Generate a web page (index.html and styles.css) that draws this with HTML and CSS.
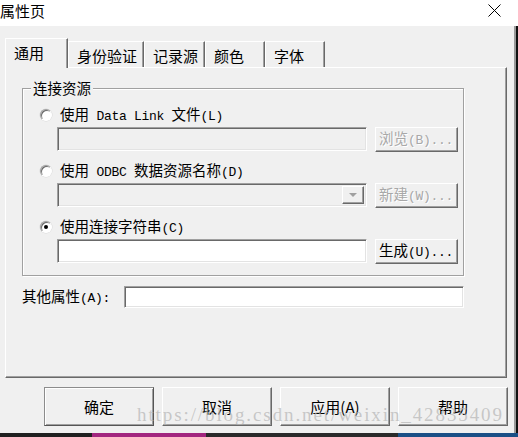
FILE: index.html
```html
<!DOCTYPE html>
<html lang="zh-CN">
<head>
    <meta charset="UTF-8">
    <meta name="viewport" content="width=device-width, initial-scale=1.0">
    <title>属性页</title>
    <link rel="stylesheet" href="styles.css">
</head>
<body>
    <div class="window">
        <div class="titlebar">
            <span class="title">属性页</span>
            <svg class="close" width="13" height="13" viewBox="0 0 13 13">
                <path d="M0.5 0.5L12.5 12.5M12.5 0.5L0.5 12.5" stroke="#000" stroke-width="1" fill="none"/>
            </svg>
        </div>
        <div class="frame">
            <div class="client">
                <div class="tabs">
                    <div class="tab active">通用</div>
                    <div class="tab">身份验证</div>
                    <div class="tab">记录源</div>
                    <div class="tab">颜色</div>
                    <div class="tab">字体</div>
                </div>
                <div class="panel">
                    <div class="group">
                        <span class="group-title">连接资源</span>
                        <div class="option">
                            <span class="radio"></span>
                            <span>使用<span class="a"> Data Link </span>文件<span class="a">(L)</span></span>
                        </div>
                        <div class="field-row">
                            <div class="edit disabled"></div>
                            <button class="btn" disabled>浏览<span class="a">(B)...</span></button>
                        </div>
                        <div class="option">
                            <span class="radio"></span>
                            <span>使用<span class="a"> ODBC </span>数据资源名称<span class="a">(D)</span></span>
                        </div>
                        <div class="field-row">
                            <div class="edit disabled combo">
                                <span class="drop"><span class="arrow"></span></span>
                            </div>
                            <button class="btn" disabled>新建<span class="a">(W)...</span></button>
                        </div>
                        <div class="option">
                            <span class="radio checked"></span>
                            <span>使用连接字符串<span class="a">(C)</span></span>
                        </div>
                        <div class="field-row">
                            <div class="edit"></div>
                            <button class="btn">生成<span class="a">(U)...</span></button>
                        </div>
                    </div>
                    <div class="other-row">
                        <label>其他属性<span class="a">(A):</span></label>
                        <div class="edit"></div>
                    </div>
                </div>
                <div class="actions">
                    <button class="dlg-btn default">确定</button>
                    <button class="dlg-btn">取消</button>
                    <button class="dlg-btn">应用(A)</button>
                    <button class="dlg-btn">帮助</button>
                </div>
            </div>
            <div class="side"></div>
        </div>
        <div class="taskbar"></div>
        <div class="watermark">https://blog.csdn.net/weixin_42835409</div>
    </div>
</body>
</html>
```

FILE: styles.css
```css
body {
    margin: 0;
    background-color: #1c1c1c;
    font-family: "Noto Sans CJK SC", sans-serif;
    color: #000;
}

.window {
    position: relative;
    width: 518px;
    height: 437px;
    overflow: hidden;
}

/* title bar */
.titlebar {
    height: 26px;
    background-color: #fff;
    display: flex;
    align-items: center;
    justify-content: space-between;
    padding-right: 17px;
}

.title {
    font-size: 15px;
    line-height: 20px;
    margin-top: -4px;
}

.close {
    display: block;
    margin-top: -5px;
}

.frame {
    display: flex;
    height: 407px;
}

.client {
    width: 514px;
    background-color: #f0f0f0;
    padding-top: 12px;
    box-sizing: border-box;
}

.side {
    flex: 1;
    background: linear-gradient(90deg, #9a9a9a 0 2px, #111 2px);
}

.taskbar {
    height: 4px;
    background: linear-gradient(90deg, #202020 0 92px, #a2267f 92px 206px, #2a2a2a 206px 398px, #1a4f86 398px);
}

/* tabs */
.tabs {
    display: flex;
    align-items: flex-end;
    padding-left: 5px;
    height: 29px;
}

.tab {
    position: relative;
    box-sizing: border-box;
    min-width: 60px;
    height: 26px;
    padding: 0 6px 0 8px;
    font-size: 15px;
    line-height: 27px;
    background-color: #f0f0f0;
    border-top: 1px solid #fff;
    border-left: 1px solid #fff;
    border-right: 1px solid #696969;
    box-shadow: inset -1px 0 0 #a0a0a0;
}

.tab.active {
    min-width: 63px;
    height: 30px;
    line-height: 27px;
    margin-bottom: -1px;
    z-index: 1;
}

/* tab page */
.panel {
    width: 502px;
    height: 311px;
    margin-left: 5px;
    box-sizing: border-box;
    padding: 20px 0 0 16px;
    border-top: 1px solid #fff;
    border-left: 1px solid #fff;
    border-right: 1px solid #696969;
    border-bottom: 1px solid #696969;
    box-shadow: inset -1px -1px 0 #a0a0a0;
    font-size: 14.5px;
}

.a {
    font-family: "Liberation Mono", monospace;
    font-size: 13px;
    letter-spacing: -0.3px;
}

.group {
    position: relative;
    width: 442px;
    box-sizing: border-box;
    padding: 14px 0 11px 0;
    border: 1px solid #a0a0a0;
    box-shadow: 1px 1px 0 #fff, inset 1px 1px 0 #fff;
}

.group-title {
    position: absolute;
    top: -10px;
    left: 8px;
    padding: 0 2px;
    line-height: 18px;
    background-color: #f0f0f0;
}

.option {
    display: flex;
    align-items: center;
    gap: 8px;
    height: 24px;
    padding-left: 17px;
    line-height: 18px;
}

.radio {
    box-sizing: border-box;
    width: 12px;
    height: 12px;
    border-radius: 50%;
    background-color: #fff;
    border: 1px solid;
    border-color: #a0a0a0 #fff #fff #a0a0a0;
    box-shadow: inset 1px 1px 0 #696969, 0 0 0 0.5px #d8d8d8;
    display: flex;
    align-items: center;
    justify-content: center;
}

.radio.checked::after {
    content: "";
    width: 4px;
    height: 4px;
    border-radius: 50%;
    background-color: #000;
}

.field-row {
    display: flex;
    gap: 8px;
    height: 25px;
    padding-left: 34px;
    margin-bottom: 7px;
}

.field-row:last-child {
    margin-bottom: 0;
}

.edit {
    position: relative;
    box-sizing: border-box;
    width: 310px;
    height: 24px;
    background-color: #fff;
    border: 1px solid;
    border-color: #a0a0a0 #fff #fff #a0a0a0;
    box-shadow: inset 1px 1px 0 #696969, inset -1px -1px 0 #e3e3e3;
}

.edit.disabled {
    background-color: #f0f0f0;
}

.combo {
    display: flex;
    justify-content: flex-end;
    padding: 2px;
}

.drop {
    box-sizing: border-box;
    width: 22px;
    height: 100%;
    display: flex;
    align-items: center;
    justify-content: center;
    border: 1px solid;
    border-color: #fff #696969 #696969 #fff;
    box-shadow: inset -1px -1px 0 #a0a0a0;
}

.arrow {
    width: 0;
    height: 0;
    border-left: 4px solid transparent;
    border-right: 4px solid transparent;
    border-top: 4px solid #a0a0a0;
}

.btn {
    box-sizing: border-box;
    width: 83px;
    height: 25px;
    padding: 0 0 0 3px;
    text-align: left;
    font-family: "Noto Sans CJK SC", sans-serif;
    font-size: 14.5px;
    line-height: 18px;
    color: #000;
    background-color: #f0f0f0;
    border: 1px solid;
    border-color: #fff #696969 #696969 #fff;
    box-shadow: inset -1px -1px 0 #a0a0a0;
}

.btn:disabled {
    color: #a8a8a8;
    text-shadow: 1px 1px 0 #fff;
}

.other-row {
    display: flex;
    align-items: center;
    width: 442px;
    margin-top: 10px;
    line-height: 18px;
}

.other-row .edit {
    width: 340px;
    height: 22px;
    margin-left: auto;
}

/* dialog buttons */
.actions {
    display: flex;
    justify-content: flex-end;
    gap: 8px;
    padding-right: 6px;
    margin-top: 9px;
}

.dlg-btn {
    box-sizing: border-box;
    width: 110px;
    height: 39px;
    font-family: "Noto Sans CJK SC", sans-serif;
    font-size: 15px;
    color: #000;
    background-color: #f0f0f0;
    border: 1px solid;
    border-color: #fff #696969 #696969 #fff;
    box-shadow: inset -1px -1px 0 #a0a0a0;
}

.dlg-btn.default {
    border-color: #8c8c8c #555 #555 #8c8c8c;
    box-shadow: inset 1px 1px 0 #fff, inset -1px -1px 0 #a0a0a0;
}

.watermark {
    position: absolute;
    left: 137px;
    top: 404px;
    font-family: "Liberation Serif", serif;
    font-size: 19px;
    line-height: 22px;
    letter-spacing: 1.9px;
    color: rgba(180, 180, 180, 0.7);
    white-space: nowrap;
}
```
